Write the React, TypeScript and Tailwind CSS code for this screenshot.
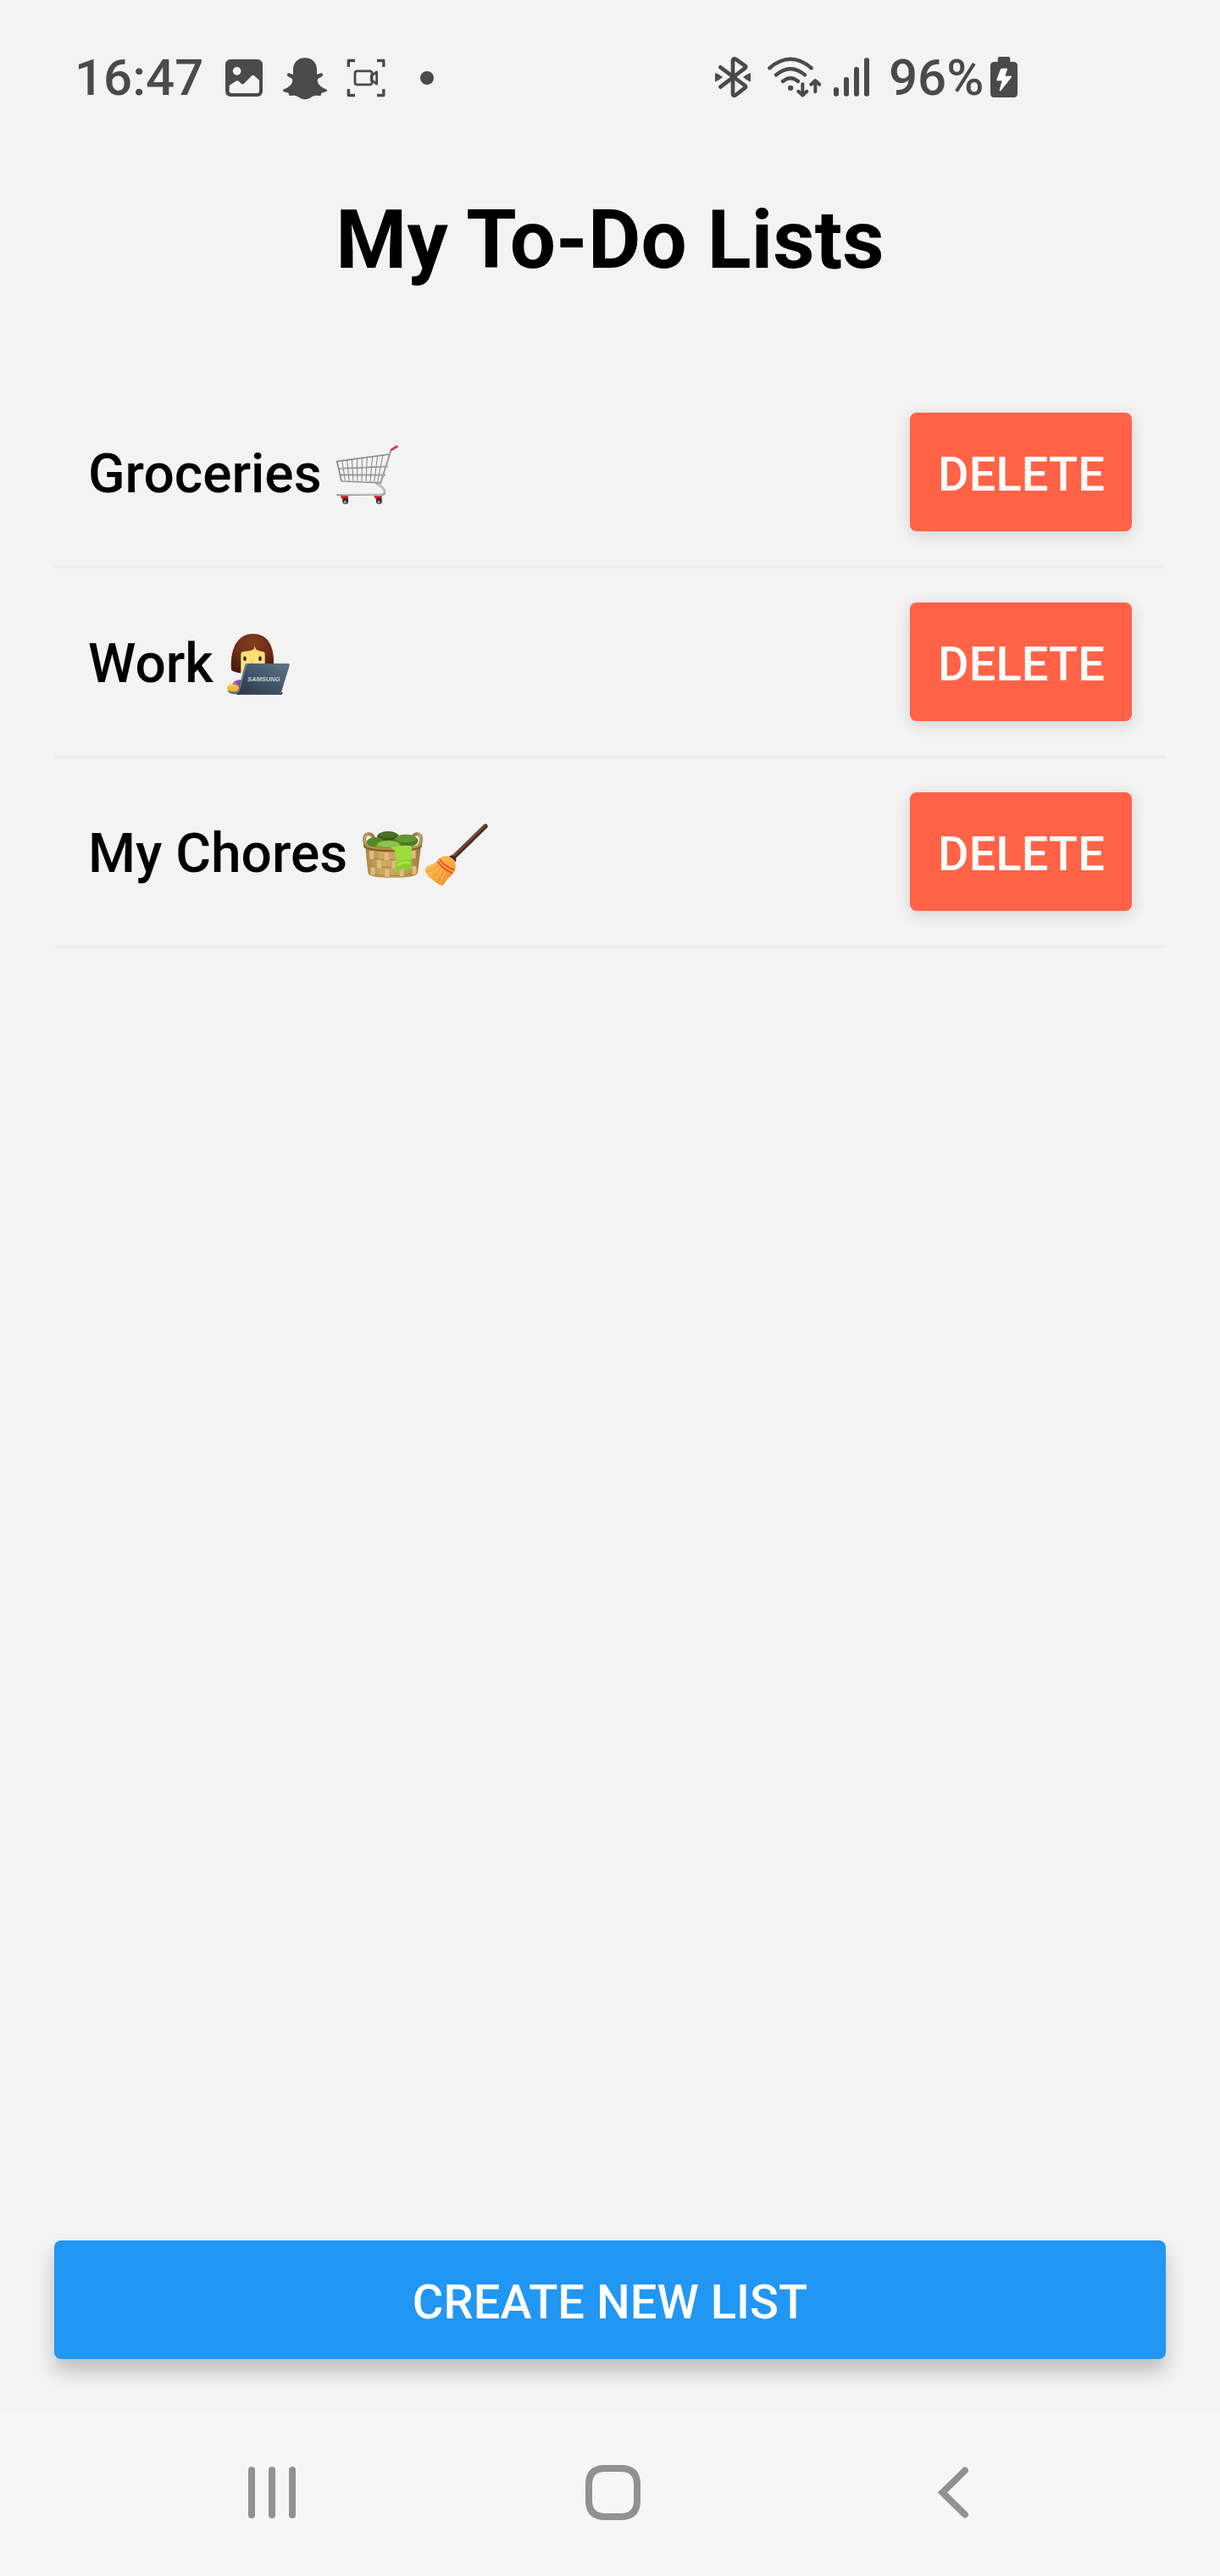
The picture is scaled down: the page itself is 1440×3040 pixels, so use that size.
import React from "react";

const INK = "#4a4a4a";

function PhotoIcon() {
  return (
    <svg className="h-[52px] w-[44px] shrink-0" viewBox="588 78 132 156">
      <path
        fillRule="evenodd"
        fill={INK}
        d="M606 90h96a18 18 0 0 1 18 18v96a18 18 0 0 1-18 18h-96a18 18 0 0 1-18-18v-96a18 18 0 0 1 18-18ZM629 117a14.500 14.500 0 1 0 .01 0ZM602 184v18q0 8 8 8h90q8 0 8-8v-38l-16-15q-6-5-12 0l-26 27q-5 4-10 0l-8-8q-6-5-12 0l-18 12q-4 2-4 4Z"
      />
    </svg>
  );
}

function GhostIcon() {
  return (
    <svg className="h-[52px] w-[52px] shrink-0" viewBox="792 78 156 156">
      <path
        fill={INK}
        d="M870 85c26 0 42 17 42 42v16c6 1 10-4 15-4 7 0 9 8 3 12-6 4-15 7-16 12 0 16 15 28 33 34 2 1 2 5 0 6-7 4-15 4-18 6-3 2 0 8-4 9-5 2-15-1-24 2-10 3-16 12-31 12s-21-9-31-12c-9-3-19 0-24-2-4-1-1-7-4-9-3-2-11-2-18-6-2-1-2-5 0-6 18-6 33-18 33-34-1-5-10-8-16-12-6-4-4-12 3-12 5 0 9 5 15 4v-16c0-25 16-42 42-42Z"
      />
    </svg>
  );
}

function ScreenRecordIcon() {
  return (
    <svg className="h-[52px] w-[46px] shrink-0" viewBox="1017 78 138 156" fill="none" stroke={INK}>
      <path
        strokeWidth="10"
        strokeLinejoin="round"
        d="M1024 117V94.500H1047M1125 94.500h23.500V117M1148.500 195v22.500H1125M1047 217.500h-23V195"
      />
      <rect x="1047" y="131.500" width="60" height="48" rx="8" strokeWidth="8.500" />
      <path strokeWidth="8.500" strokeLinejoin="round" d="M1105 148l19-13v42l-19-13Z" />
    </svg>
  );
}

function BluetoothIcon() {
  return (
    <svg className="h-[52px] w-[42px] shrink-0" viewBox="72 78 126 156">
      <path
        fill="none"
        stroke={INK}
        strokeWidth="14"
        strokeLinecap="round"
        strokeLinejoin="round"
        d="M91 118l87 65q5 4 0 8l-32 25q-10 6-11-4V94q1-10 11-4l32 23q5 4 0 8l-87 67"
      />
      <path
        fill={INK}
        stroke={INK}
        strokeWidth="4"
        strokeLinejoin="round"
        d="M74 141q11 4 22 12-11 9-22 14-2-13 0-26ZM196 141q-11 4-22 12 11 9 22 14 2-13 0-26Z"
      />
    </svg>
  );
}

function WifiIcon() {
  return (
    <svg
      className="h-[52px] w-[63px] shrink-0"
      viewBox="258 78 189 156"
      fill="none"
      stroke={INK}
      strokeWidth="13"
      strokeLinecap="round"
    >
      <path d="M265 121q74-63 148 0M288 145q51-43 102 0M312 168q27-22 54 0" />
      <circle cx="339.500" cy="191.500" r="9.500" fill={INK} stroke="none" />
      <path strokeWidth="12" strokeLinejoin="round" d="M382 178v38M367 203.500l15 14 15-14M427 205v-38M412 179l15-14 15 14" />
    </svg>
  );
}

function SignalIcon() {
  return (
    <svg className="h-[52px] w-[42px] shrink-0" viewBox="492 78 126 156" fill={INK}>
      <rect x="492" y="189" width="18" height="32" rx="8" />
      <rect x="528" y="153" width="18" height="68" rx="8" />
      <rect x="564" y="117" width="18" height="104" rx="8" />
      <rect x="600" y="85" width="18" height="136" rx="8" />
    </svg>
  );
}

function BatteryIcon() {
  return (
    <svg className="h-[52px] w-[32px] shrink-0" viewBox="1047 78 96 156">
      <path
        fill={INK}
        d="M1079 81h32q6 0 6 6v12h12q14 0 14 14v98q0 14-14 14h-68q-14 0-14-14v-98q0-14 14-14h12v-12q0-6 6-6Z"
      />
      <path
        fill="#fff"
        d="M1088 122h17q3 0 2 3l-8 24h21q4 1 2 4l-38 48q-5 3-5-2l9-33h-16q-4-1-3-4l14-37q2-3 5-3Z"
      />
    </svg>
  );
}

function CartEmoji() {
  return (
    <svg className="h-[74px] w-[75px] shrink-0 overflow-visible" viewBox="47 36 225 222" fill="none" role="img" aria-label="shopping cart">
      <path stroke="#a8a8a8" strokeWidth="8" d="M192 180q30 14 32 32 0 10-12 10" />
      <path stroke="#efefef" strokeWidth="2" d="M196 181q25 14 26 31" />
      <path stroke="#858585" strokeWidth="5.500" d="M57 222l153-1" strokeLinecap="round" />
      <path stroke="#dedede" strokeWidth="2" d="M59 221l151-1" />
      <g stroke="#808080" strokeWidth="3">
        <path d="M73 101l11 69M91 98l7 73M108 95l5 77M126 92l2 81M144 89l-1 85M162 87l-4 87M181 84l-8 91M199 82l-12 94M218 80l-19 98" />
      </g>
      <g stroke="#7e7e7e" strokeWidth="5">
        <path d="M55 103l188-25M60 129l175-8M64 151l163 1" />
        <path d="M55 102l16 71 140 6" strokeLinejoin="round" strokeWidth="4.500" />
        <path d="M210 179l37-117" strokeLinecap="round" strokeWidth="5.500" />
      </g>
      <g stroke="#d6d6d6" strokeWidth="1.500">
        <path d="M56 101l186-25M60 128l174-8M65 150l162 1M72 172l137 5M211 176l35-109" />
      </g>
      <path d="M251 61l16-10" stroke="#d83a3a" strokeWidth="9" strokeLinecap="round" />
      <g>
        <path d="M67 226h28v13H76q-6-4-9-13Z" fill="#c91b1b" />
        <path d="M186 226h28v13h-19q-6-4-9-13Z" fill="#c91b1b" />
        <circle cx="85" cy="244" r="10.500" fill="#2f2626" />
        <circle cx="84" cy="247" r="5" fill="#a5a5a5" />
        <circle cx="204" cy="244" r="10.500" fill="#2f2626" />
        <circle cx="203" cy="247" r="5" fill="#a5a5a5" />
      </g>
    </svg>
  );
}

function TechnologistEmoji() {
  return (
    <svg className="h-[74px] w-[75px] shrink-0 overflow-visible" viewBox="53 33 225 222" role="img" aria-label="woman technologist">
      <defs>
        <radialGradient id="hair" cx="0.5" cy="0.25" r="0.75">
          <stop offset="0" stopColor="#85401f" />
          <stop offset="0.6" stopColor="#6a2c14" />
          <stop offset="1" stopColor="#4b1a0b" />
        </radialGradient>
        <linearGradient id="laptop" x1="1" y1="0" x2="0" y2="1">
          <stop offset="0" stopColor="#61788a" />
          <stop offset="0.5" stopColor="#42566a" />
          <stop offset="1" stopColor="#2a3849" />
        </linearGradient>
        <linearGradient id="face" x1="0" y1="0" x2="0" y2="1">
          <stop offset="0" stopColor="#ffda63" />
          <stop offset="1" stopColor="#ffe79a" />
        </linearGradient>
      </defs>
      <path d="M68 168C62 95 88 40 143 39s82 45 74 128q-30 14-72 12-52 3-77-11Z" fill="url(#hair)" />
      <path d="M102 108q2-6 9-6 26-2 36-8 3-4 4-12 2 8 5 12 4 5 24 8 7 1 7 8v70h-85Z" fill="url(#face)" />
      <ellipse cx="116" cy="127" rx="6.500" ry="9" fill="#9b7a28" />
      <ellipse cx="116" cy="127" rx="4" ry="7" fill="#2c2416" />
      <ellipse cx="170" cy="127" rx="6.500" ry="9" fill="#9b7a28" />
      <ellipse cx="170" cy="127" rx="4" ry="7" fill="#2c2416" />
      <path d="M143 130l-4 11h5" fill="none" stroke="#e5ae3c" strokeWidth="2.500" />
      <path d="M72 217q6-17 31-15l-6 44H80Z" fill="#a66bb8" />
      <path d="M82 210q10-8 20-7l-4 24Z" fill="#8a4da3" />
      <path d="M55 240l10-5 34 12-4 7-25-2q-14-4-15-12Z" fill="#6c7882" />
      <path d="M53 232c0-10 11-16 24-14 15 1 21 9 17 17-3 7-12 9-22 8-11-1-19-4-19-11Z" fill="#f9b62d" />
      <path d="M57 229q5-9 18-8 10 0 15 5-15-1-33 3Z" fill="#ffd866" />
      <path d="M88 252h155q4-1 6-5" fill="none" stroke="#17202b" strokeWidth="5" />
      <path d="M125 144h144q7 0 5 8l-29 93q-2 6-9 6H94q-5 0-3-6l25-94q2-7 9-7Z" fill="url(#laptop)" />
      <path d="M94 246l25-93q2-6 8-7" fill="none" stroke="#8496a4" strokeWidth="3" />
      <text
        x="125"
        y="207"
        textLength="116"
        lengthAdjust="spacingAndGlyphs"
        fill="#ccd3d8"
        className="font-['Liberation_Sans'] text-[24px] font-bold italic"
      >
        SAMSUNG
      </text>
    </svg>
  );
}

function BasketEmoji() {
  return (
    <svg className="h-[74px] w-[75px] shrink-0 overflow-visible" viewBox="48 45 225 222" role="img" aria-label="basket">
      <defs>
        <linearGradient id="wicker" x1="0" y1="0" x2="1" y2="0">
          <stop offset="0" stopColor="#a88447" />
          <stop offset="0.3" stopColor="#cfaa64" />
          <stop offset="0.75" stopColor="#c59f58" />
          <stop offset="1" stopColor="#96733a" />
        </linearGradient>
        <clipPath id="basketBody">
          <path d="M64 138h196l-11 86q-4 18-89 18t-87-18Z" />
        </clipPath>
      </defs>
      <path d="M66 133q-14-42 8-45 17-1 20 18M254 133q17-40-6-45-14-1-18 16" fill="none" stroke="#9f8049" strokeWidth="12" strokeLinecap="round" />
      <path d="M66 131q-12-39 8-42M254 131q14-38-4-42" fill="none" stroke="#c9aa70" strokeWidth="5" strokeLinecap="round" />
      <ellipse cx="144" cy="98" rx="39" ry="20" fill="#3f5a17" />
      <ellipse cx="144" cy="91" rx="32" ry="10" fill="#4f6f20" />
      <ellipse cx="99" cy="117" rx="31" ry="18" fill="#578728" />
      <ellipse cx="207" cy="112" rx="43" ry="23" fill="#4c7c20" />
      <ellipse cx="207" cy="104" rx="36" ry="13" fill="#659633" />
      <ellipse cx="146" cy="128" rx="43" ry="18" fill="#77ad36" />
      <ellipse cx="146" cy="123" rx="37" ry="11" fill="#8cc44c" />
      <g clipPath="url(#basketBody)">
        <path d="M60 130h204v115H60Z" fill="url(#wicker)" />
        <path d="M60 171q100 16 204 0M60 198q100 18 204 0M65 227q96 18 190-2" fill="none" stroke="#a17f43" strokeWidth="3" />
        <g fill="#dfbd7c" stroke="#b8955a" strokeWidth="1">
          <path d="M78 146h16v31H78ZM130 152h18v29h-18ZM104 179h17v30h-17ZM156 182h17v29h-17ZM82 205h16v28H82ZM132 210h17v30h-17ZM184 209h17v30h-17ZM226 145h16v30h-16ZM229 201h16v30h-16Z" />
        </g>
        <path d="M67 231q93 20 186-1v15H67Z" fill="#906b2e" opacity="0.500" />
      </g>
      <path d="M64 130q18 14 96 14t97-14" fill="none" stroke="#876125" strokeWidth="14" strokeLinecap="round" />
      <path d="M64 127q18 14 96 14t97-14" fill="none" stroke="#bb944f" strokeWidth="6" strokeLinecap="round" />
      <path d="M152 135q24-8 68-6 9 1 8 10-3 39 1 70-28 1-56 10-6 1-5-8 4-25 4-45 1-21-20-31Z" fill="#a0db3e" />
      <path d="M172 190q28-13 55-11v29q-28 2-57 10Z" fill="#8cca30" />
      <path d="M175 194q24-14 48-9v10q-28-5-49 10Z" fill="#a8e34a" />
    </svg>
  );
}

function BroomEmoji() {
  return (
    <svg className="h-[74px] w-[75px] shrink-0 overflow-visible" viewBox="273 45 225 222" role="img" aria-label="broom">
      <defs>
        <linearGradient id="straw" x1="0" y1="0" x2="1" y2="1">
          <stop offset="0" stopColor="#ffc768" />
          <stop offset="0.5" stopColor="#faa940" />
          <stop offset="1" stopColor="#df8a2c" />
        </linearGradient>
      </defs>
      <path d="M372 174L489 60" stroke="#4b2b1e" strokeWidth="16" strokeLinecap="round" />
      <path d="M370 172L487 58" stroke="#79503c" strokeWidth="6" strokeLinecap="round" />
      <path d="M360 168q7-8 14-4l10 10q4 7-3 13Z" fill="#3e2218" />
      <path
        d="M328 172q14-9 31-5 9 3 17 10 8 10 7 31-1 14-15 26-15 13-29 35-6 3-11-3-7 1-11-6-8 0-11-8-7-1-8-7-10-2-13-12-6-4-9-10-1-12 3-18 4-5 14-8 20-4 35-25Z"
        fill="url(#straw)"
      />
      <path d="M280 217q25 5 44-20M300 240q20-12 31-32M320 254q15-17 23-39M336 264q6-22 20-44" fill="none" stroke="#e0913a" strokeWidth="2.500" />
      <path d="M289 227q22-4 36-22M311 247q14-14 25-36M328 261q9-21 20-41" fill="none" stroke="#ffce7c" strokeWidth="2" />
      <path d="M326 176q13 23 52 39M319 184q15 25 52 42" fill="none" stroke="#e2482b" strokeWidth="5" />
    </svg>
  );
}

const lists = [
  { name: "Groceries", emojis: [CartEmoji] },
  { name: "Work", emojis: [TechnologistEmoji] },
  { name: "My Chores", emojis: [BasketEmoji, BroomEmoji] },
];

function StatusBar() {
  return (
    <header className="flex h-[184px] items-center pl-[88px] text-[60px] leading-none text-[#4a4a4a]">
      <span className="w-[178px] whitespace-nowrap font-medium">16:47</span>
      <PhotoIcon />
      <div className="w-6" />
      <GhostIcon />
      <div className="w-[23px]" />
      <ScreenRecordIcon />
      <div className="ml-[41px] size-4 rounded-full bg-[#4a4a4a]" />
      <div className="ml-[332px] flex items-center">
        <BluetoothIcon />
        <div className="w-5" />
        <WifiIcon />
        <div className="w-[15px]" />
        <SignalIcon />
        <span className="ml-[23px] w-[120px] whitespace-nowrap font-medium">96%</span>
        <BatteryIcon />
      </div>
    </header>
  );
}

function NavigationBar() {
  return (
    <nav className="flex h-48 items-center bg-[#f6f6f6] pb-[6px]">
      <svg className="ml-[293px] h-[61px] w-[56px]" viewBox="0 0 56 61" fill="#919191">
        <rect width="8" height="61" rx="4" />
        <rect x="24" width="8" height="61" rx="4" />
        <rect x="48" width="8" height="61" rx="4" />
      </svg>
      <svg className="ml-[342px] h-[65px] w-[65px]" viewBox="0 0 65 65" fill="none">
        <path
          d="M23 4h19q19 0 19 19v19q0 19-19 19H23Q4 61 4 42V23Q4 4 23 4Z"
          stroke="#919191"
          strokeWidth="8"
        />
      </svg>
      <svg className="ml-[351px] h-[61px] w-[37px]" viewBox="0 0 37 61" fill="none">
        <path d="M32 4.500L5.500 30.500L32 56.500" stroke="#919191" strokeWidth="8" strokeLinecap="round" />
      </svg>
    </nav>
  );
}

export default function App() {
  return (
    <div className="flex h-[3040px] w-[1440px] flex-col overflow-hidden bg-[#f3f3f3] font-['Roboto',sans-serif]">
      <StatusBar />
      <h1 className="mt-[43px] text-center text-[96px] font-bold leading-[112px] tracking-[0.1px] text-black">
        My To-Do Lists
      </h1>
      <ul className="mx-16 mt-[108px]">
        {lists.map(({ name, emojis }) => (
          <li key={name} className="flex h-56 items-center justify-between border-b-4 border-[#eeeeee] px-10">
            <div className="flex items-center">
              <span className="whitespace-pre pt-[6px] text-[64px] font-medium leading-[76px] text-black">{name} </span>
              <div className="mt-1 flex">
                {emojis.map((Emoji, i) => (
                  <Emoji key={i} />
                ))}
              </div>
            </div>
            <button className="h-[140px] w-[262px] rounded-lg bg-[#ff6347] pl-px pt-[6px] text-[56px] font-medium tracking-[0.1px] text-white shadow-[0_4px_18px_rgba(0,0,0,0.14)]">
              DELETE
            </button>
          </li>
        ))}
      </ul>
      <button className="mx-16 mb-16 mt-auto h-[140px] rounded-lg bg-[#2196f3] pt-[6px] text-[56px] font-medium tracking-[0.05px] text-white shadow-[0_14px_22px_rgba(0,0,0,0.22)]">
        CREATE NEW LIST
      </button>
      <NavigationBar />
    </div>
  );
}
